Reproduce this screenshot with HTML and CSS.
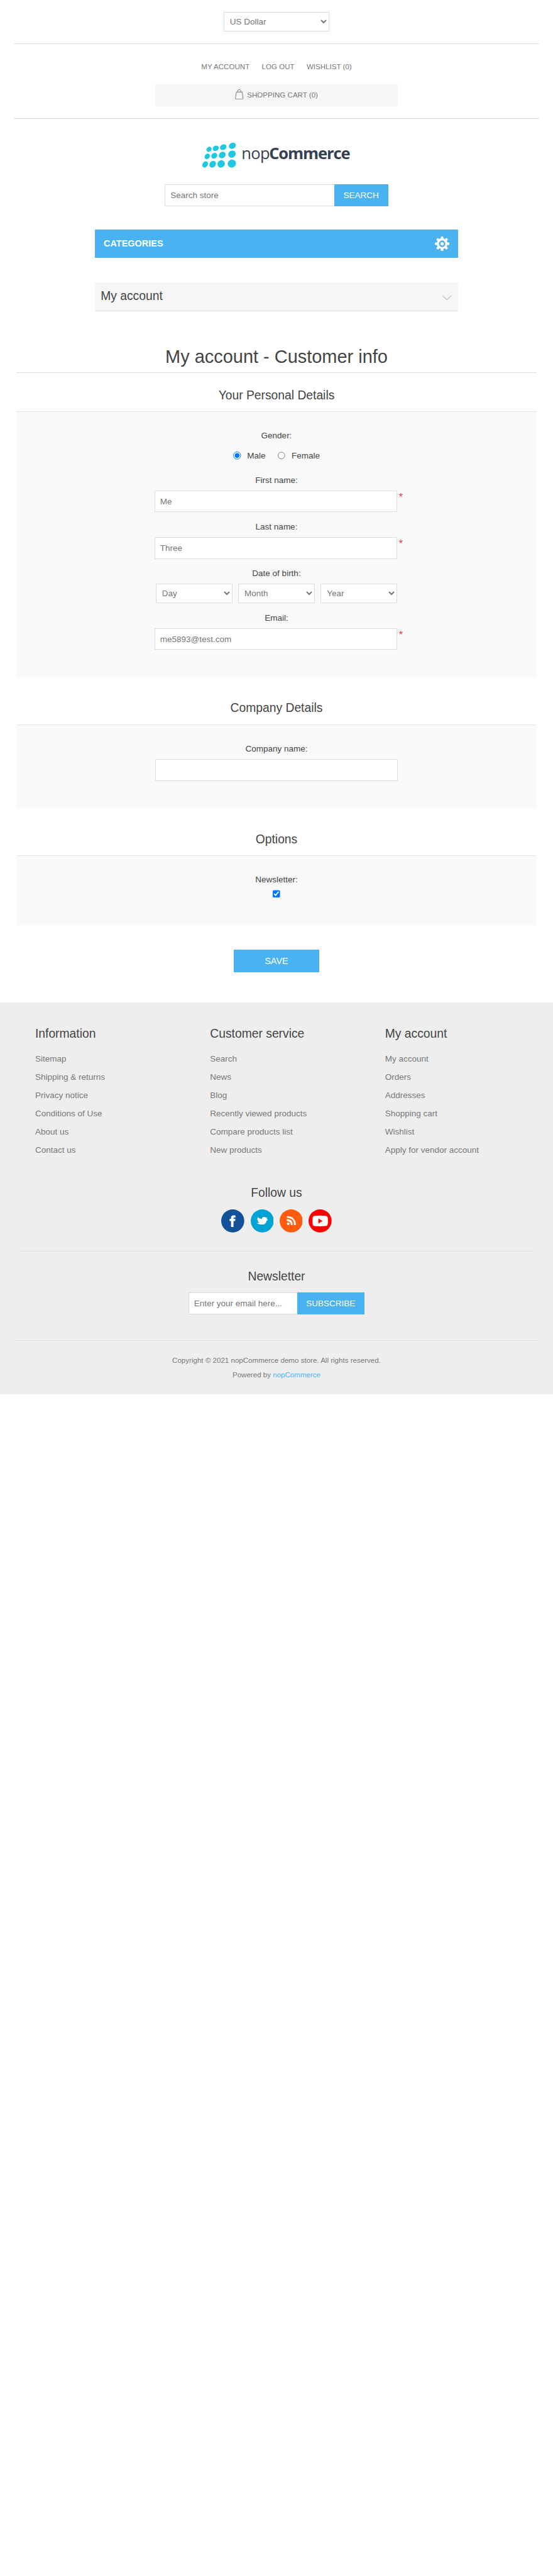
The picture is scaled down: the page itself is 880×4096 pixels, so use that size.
FILE: index.html
```html
<!DOCTYPE html>
<html lang="en">
<head>
<meta charset="utf-8">
<title>nopCommerce demo store. Customer info</title>
<link rel="stylesheet" href="styles.css">
</head>
<body>
<div class="page">
  <header class="header">
    <div class="header-currency">
      <select class="select currency"><option>US Dollar</option></select>
    </div>
    <div class="header-links">
      <nav class="links"><a>My account</a><a>Log out</a><a>Wishlist (0)</a></nav>
      <div class="cart">
        <svg class="cart-icon" width="14" height="17" viewBox="0 0 14 17" fill="none" stroke="#777"><path d="M2.3 4.5h9.4l1.6 10.2q.2 1.6-1.4 1.6H2.1q-1.6 0-1.4-1.6zM4.6 4.5V2.2Q4.6.7 6 .7h2q1.4 0 1.4 1.5v2.3"/></svg>
        <span>Shopping cart (0)</span>
      </div>
    </div>
    <svg class="logo" width="244" height="48" viewBox="0 0 244 48">
      <g fill="#20c7e0">
        <ellipse cx="11" cy="14" rx="4.5" ry="3.7" transform="rotate(-40 11 14)"/>
        <ellipse cx="22" cy="12.3" rx="5.3" ry="4.2" transform="rotate(-35 22 12.3)"/>
        <ellipse cx="34.5" cy="10.4" rx="5.6" ry="4.4" transform="rotate(-30 34.5 10.4)"/>
        <ellipse cx="49.5" cy="8" rx="6" ry="4.9" transform="rotate(-25 49.5 8)"/>
        <ellipse cx="8.1" cy="25.6" rx="5.1" ry="4" transform="rotate(-48 8.1 25.6)"/>
        <ellipse cx="19.7" cy="24.5" rx="5.3" ry="4.5" transform="rotate(-42 19.7 24.5)"/>
        <ellipse cx="32.8" cy="23.3" rx="5.9" ry="5.1" transform="rotate(-38 32.8 23.3)"/>
        <ellipse cx="48.8" cy="21.9" rx="6.4" ry="5.7" transform="rotate(-30 48.8 21.9)"/>
        <ellipse cx="4.6" cy="38.8" rx="5.6" ry="4.3" transform="rotate(-55 4.6 38.8)"/>
        <ellipse cx="17" cy="38.4" rx="6" ry="5" transform="rotate(-50 17 38.4)"/>
        <ellipse cx="31" cy="37.9" rx="6.4" ry="5.8" transform="rotate(-45 31 37.9)"/>
        <ellipse cx="48.6" cy="37.4" rx="6.9" ry="6.5" transform="rotate(-30 48.6 37.4)"/>
      </g>
      <text class="logo-light" x="64.5" y="30">nop</text>
      <text class="logo-bold" x="110" y="30">Commerce</text>
    </svg>
    <form class="search">
      <input class="input search-input" placeholder="Search store">
      <button class="button" type="button">Search</button>
    </form>
  </header>

  <div class="menu-toggle">
    <span>Categories</span>
    <svg width="24" height="24" viewBox="-12 -12 24 24">
      <g fill="#fff"><circle r="8.8"/>
        <g id="teeth"><rect x="-2.1" y="-12" width="4.2" height="24" rx="1.6"/><rect x="-12" y="-2.1" width="24" height="4.2" rx="1.6"/></g>
        <use href="#teeth" transform="rotate(45)"/>
      </g>
      <circle r="4.1" fill="none" stroke="#4ab2f1" stroke-width="2.6"/>
    </svg>
  </div>
  <div class="block-title">
    <span>My account</span>
    <svg width="17" height="9" viewBox="0 0 17 9" fill="none" stroke="#bbb" stroke-width="1.1"><path d="M.7.6l7.8 7.4L16.300.6"/></svg>
  </div>

  <main class="main">
    <h1 class="page-title">My account - Customer info</h1>

    <h2 class="section-title">Your Personal Details</h2>
    <section class="fieldset">
      <div class="field gender">
        <span class="label">Gender:</span>
        <div class="radios">
          <label><input type="radio" name="g" checked>Male</label>
          <label><input type="radio" name="g">Female</label>
        </div>
      </div>
      <div class="field">
        <span class="label">First name:</span>
        <div class="control"><input class="input" value="Me"><span class="required">*</span></div>
      </div>
      <div class="field">
        <span class="label">Last name:</span>
        <div class="control"><input class="input" value="Three"><span class="required">*</span></div>
      </div>
      <div class="field">
        <span class="label">Date of birth:</span>
        <div class="control dates">
          <select class="select"><option>Day</option></select>
          <select class="select"><option>Month</option></select>
          <select class="select"><option>Year</option></select>
        </div>
      </div>
      <div class="field">
        <span class="label">Email:</span>
        <div class="control"><input class="input" value="me5893@test.com"><span class="required">*</span></div>
      </div>
    </section>

    <h2 class="section-title">Company Details</h2>
    <section class="fieldset">
      <div class="field">
        <span class="label">Company name:</span>
        <input class="input company">
      </div>
    </section>

    <h2 class="section-title">Options</h2>
    <section class="fieldset">
      <div class="field">
        <span class="label">Newsletter:</span>
        <input class="check" type="checkbox" checked>
      </div>
    </section>
    <button class="button save" type="button">Save</button>
  </main>

  <footer class="footer">
    <div class="columns">
      <div><h3>Information</h3><ul><li>Sitemap</li><li>Shipping &amp; returns</li><li>Privacy notice</li><li>Conditions of Use</li><li>About us</li><li>Contact us</li></ul></div>
      <div><h3>Customer service</h3><ul><li>Search</li><li>News</li><li>Blog</li><li>Recently viewed products</li><li>Compare products list</li><li>New products</li></ul></div>
      <div><h3>My account</h3><ul><li>My account</li><li>Orders</li><li>Addresses</li><li>Shopping cart</li><li>Wishlist</li><li>Apply for vendor account</li></ul></div>
    </div>
    <div class="follow">
      <h3>Follow us</h3>
      <div class="socials">
        <svg width="38" height="38" viewBox="0 0 38 38"><circle cx="19" cy="19" r="19" fill="#135198"/><path fill="#fff" d="M16.200 29V19.200h-2.400v-3.600h2.400v-1.700c0-2.700 1.500-4 4.100-4 1.300 0 2.500.1 3.300.3v3.200h-1.900c-1 0-1.400.4-1.400 1.200v1h3.200l-.5 3.600h-2.700V29z"/></svg>
        <svg width="38" height="38" viewBox="0 0 38 38"><circle cx="19" cy="19" r="19" fill="#00a3d3"/><path fill="#fff" d="M12 12.800c2 2.300 4.200 3 6.300 3.100.2-2.300 2-3.700 4-3.700l3 1.200 1.700-.3-.8 1.800 2.100 2.600-2.200 1.100c-.2 4-3.200 6.300-7 6.300-3.500.1-6.600-.6-9-2.600 2 .3 3.400-.1 4.700-1.200-1.800-.2-2.900-1-3.300-2.300h1.400c-1.500-.7-2.300-1.700-2.300-3.300l1.400.4C11 14.900 11.300 13.700 12 12.800z"/></svg>
        <svg width="38" height="38" viewBox="0 0 38 38"><circle cx="19" cy="19" r="19" fill="#ff5d0d"/><circle cx="14.200" cy="23.700" r="2.200" fill="#fff"/><path fill="none" stroke="#fff" stroke-width="2.9" d="M12 17.600c5.100 0 8.100 3 8.100 8.300M12 12.600c8.500 0 13.300 4.800 13.300 13.300"/></svg>
        <svg width="38" height="38" viewBox="0 0 38 38"><circle cx="19" cy="19" r="19" fill="#f00"/><path fill="#fff" fill-rule="evenodd" d="M10.500 10.500q8.500-.8 17 0 3.800.2 4.200 3.500.6 5 0 10-.4 3.300-4.200 3.500-8.500.8-17 0-3.300-.2-3.700-3.500-.6-5 0-10 .4-3.300 3.700-3.500zM16.200 15v8.200l7-4.100z"/></svg>
      </div>
    </div>
    <div class="newsletter">
      <h3>Newsletter</h3>
      <form class="search">
        <input class="input email-input" placeholder="Enter your email here...">
        <button class="button" type="button">Subscribe</button>
      </form>
    </div>
    <div class="legal">
      <div>Copyright © 2021 nopCommerce demo store. All rights reserved.</div>
      <div>Powered by <a>nopCommerce</a></div>
    </div>
  </footer>
</div>
</body>
</html>
```

FILE: styles.css
```css
* { box-sizing: border-box; margin: 0; padding: 0; }
body { background: #fff; }
.page {
  zoom: 0.96491;
  width: 912px;
  height: 4245px;
  font: 14px/20px "Liberation Sans", Arial, sans-serif;
  color: #777;
}
svg { display: block; flex: none; }
h1, h2, h3 { font-weight: normal; color: #444; }
h3 { font-size: 20px; line-height: 24px; }
ul { list-style: none; }

.input, .select, .button { font: 14px "Liberation Sans", Arial, sans-serif; border-radius: 0; }
.input { height: 36px; border: 1px solid #ddd; padding: 0 8px; background: #fff; color: #777; }
.input::placeholder { color: #777; }
.select { height: 32px; border: 1px solid #ddd; padding: 6px; background-color: #fff; color: #777; }
.button { height: 36px; border: 0; background: #4ab2f1; color: #fff; text-transform: uppercase; text-align: center; }

.header { width: 866px; margin: 0 auto; display: flex; flex-direction: column; align-items: center; }
.header-currency, .header-links { width: 100%; display: flex; flex-direction: column; align-items: center; border-bottom: 1px solid #ddd; padding: 20px 0; }
.currency { width: 174px; }
.header-links { padding-top: 30px; font-size: 12px; line-height: 16px; text-transform: uppercase; }
.links { display: flex; gap: 20px; margin-bottom: 20px; }
.cart { width: 400px; height: 36px; background: #f6f6f6; display: flex; align-items: center; justify-content: center; gap: 6px; }
.cart-icon { margin-top: -3px; }
.logo { margin: 36px 0 24px; overflow: visible; }
.logo text { font-family: "Open Sans", sans-serif; font-size: 26.5px; fill: #364052; letter-spacing: -0.6px; }
.logo .logo-bold { font-weight: 700; letter-spacing: -1.15px; }
.search { display: flex; justify-content: center; }
.search .input { border-right: 0; }
.search-input { width: 279px; }
.search-input + .button { width: 89px; }

.menu-toggle { width: 600px; height: 47px; margin: 38px auto 40px; padding: 0 15px; display: flex; align-items: center; justify-content: space-between; background: #4ab2f1; color: #fff; font-size: 15px; font-weight: bold; text-transform: uppercase; }
.block-title { width: 600px; height: 48px; margin: 0 auto; padding: 0 10px 1px; display: flex; align-items: center; justify-content: space-between; background: #f6f6f6; border-bottom: 1px solid #ddd; color: #444; font-size: 20px; }
.block-title svg { margin-top: 6px; }

.main { width: 858px; margin: 57px auto 0; padding-bottom: 50px; text-align: center; }
.page-title { font-size: 30px; line-height: 36px; padding-bottom: 8px; border-bottom: 1px solid #ddd; margin-bottom: 24px; }
.section-title { font-size: 20px; line-height: 24px; margin-bottom: 15px; }
.fieldset { background: #f9f9f9; border-top: 1px solid #e4e4e4; padding: 29px 0 45px; margin-bottom: 39px; display: flex; flex-direction: column; gap: 14px; color: #444; }
.field { display: flex; flex-direction: column; align-items: center; gap: 7px; }
.gender { gap: 13px; padding-bottom: 6px; }
.radios { display: flex; gap: 20px; }
.radios label { display: flex; align-items: center; gap: 10px; }
.radios input, .check { width: 13px; height: 13px; }
.control { position: relative; width: 400px; margin-right: 2px; display: flex; }
.control .input, .company { width: 400px; }
.dates { justify-content: flex-end; gap: 10px; }
.dates .select { width: 126px; }
.required { position: absolute; left: 402.5px; top: 1px; color: #e4434b; font-size: 18px; }
.save { width: 140px; height: 37px; font-size: 15px; margin-top: 1px; }

.footer { height: 646px; background: #eee; padding-top: 39px; }
.columns { display: grid; grid-template-columns: 288.5px 288.5px auto; padding-left: 58px; }
.columns h3 { margin-bottom: 16px; }
.columns li { line-height: 30px; }
.follow { width: 850px; margin: 43px auto 0; padding-bottom: 30px; border-bottom: 1px solid #ddd; text-align: center; }
.socials { display: flex; justify-content: center; gap: 10px; margin-top: 15px; }
.newsletter { width: 866px; margin: 0 auto; padding: 29px 0 43px; border-bottom: 1px solid #ddd; text-align: center; }
.newsletter h3 { margin-bottom: 15px; }
.email-input { width: 179px; }
.email-input + .button { width: 111px; }
.legal { padding-top: 20px; text-align: center; font-size: 12px; line-height: 24px; }
.legal a { color: #4ab2f1; }
```
